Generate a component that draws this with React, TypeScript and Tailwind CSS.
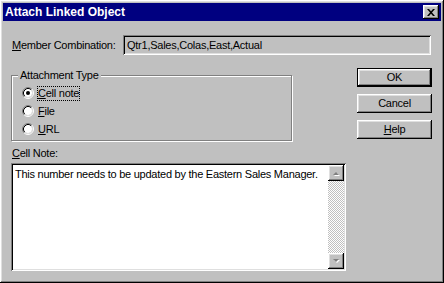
import React from "react";

const raised =
  "shadow-[inset_-1px_-1px_#000,inset_1px_1px_#fff,inset_-2px_-2px_#808080,inset_2px_2px_#dfdfdf]";
const sunken =
  "shadow-[inset_1px_1px_#808080,inset_-1px_-1px_#fff,inset_2px_2px_#000,inset_-2px_-2px_#dfdfdf]";

const Radio = ({ checked }: { checked?: boolean }) => (
  <svg width="12" height="12" viewBox="0 0 12 12" className="shrink-0">
    <circle cx="6" cy="6" r="4" fill="#fff" />
    <path d="M2.11 9.89 A5.5 5.5 0 0 1 9.89 2.11" stroke="#808080" fill="none" />
    <path d="M9.89 2.11 A5.5 5.5 0 0 1 2.11 9.89" stroke="#fff" fill="none" />
    <path d="M2.82 9.18 A4.5 4.5 0 0 1 9.18 2.82" stroke="#000" fill="none" />
    <path d="M9.18 2.82 A4.5 4.5 0 0 1 2.82 9.18" stroke="#dfdfdf" fill="none" />
    {checked && <circle cx="6" cy="6" r="2" fill="#000" />}
  </svg>
);

const Arrow = ({ up }: { up?: boolean }) => (
  <svg width="7" height="5" viewBox="0 0 7 5">
    {up ? (
      <>
        <path d="M1 5 L4 2 L7 5 Z" fill="#fff" />
        <path d="M0 4 L3 1 L6 4 Z" fill="#808080" />
      </>
    ) : (
      <>
        <path d="M1 1 L7 1 L4 4 Z" fill="#fff" />
        <path d="M0 0 L6 0 L3 3 Z" fill="#808080" />
      </>
    )}
  </svg>
);

const options = [
  { key: "C", rest: "ell note", checked: true },
  { key: "F", rest: "ile" },
  { key: "U", rest: "RL" },
];

export default function App() {
  return (
    <div
      className={`w-[444px] h-[283px] bg-[#c0c0c0] p-[3px] text-black text-[11px] leading-[13px] ${raised}`}
      style={{ fontFamily: '"Liberation Sans", Arial, sans-serif' }}
    >
      {/* title bar */}
      <div className="h-[18px] bg-[#000080] flex items-center justify-between pl-[2px] pr-[2px]">
        <span className="text-white font-bold text-[12px] leading-[14px]">Attach Linked Object</span>
        <button
          className={`w-[16px] h-[14px] bg-[#c0c0c0] flex items-center justify-center ${raised}`}
        >
          <svg width="8" height="7" viewBox="0 0 8 7">
            <path d="M0 0h2l2 2.2L6 0h2L5 3.5 8 7H6L4 4.8 2 7H0l3-3.5z" fill="#000" />
          </svg>
        </button>
      </div>

      <div className="pl-[8px] pt-[14px] tracking-[-0.25px]">
        {/* member combination */}
        <div className="flex items-center">
          <span className="w-[112px] pl-[1px]">
            <span className="underline">M</span>ember Combination:
          </span>
          <div className={`w-[308px] h-[20px] flex items-center pl-[4px] ${sunken}`}>
            Qtr1,Sales,Colas,East,Actual
          </div>
        </div>

        <div className="flex mt-[13px]">
          <div className="w-[335px]">
            {/* group box */}
            <div className="relative mt-[7px] w-[281px] h-[66px] border border-[#808080] shadow-[inset_1px_1px_#fff,1px_1px_#fff] pl-[10px] pt-[8px]">
              <span className="absolute left-[6px] top-[-7px] px-[2px] bg-[#c0c0c0]">
                Attachment Type
              </span>
              {options.map((o) => (
                <div key={o.key} className="h-[18px] flex items-center">
                  <Radio checked={o.checked} />
                  <span
                    className={`ml-[3px] border ${
                      o.checked ? "border-dotted border-black" : "border-transparent"
                    }`}
                  >
                    <span className="underline">{o.key}</span>
                    {o.rest}
                  </span>
                </div>
              ))}
            </div>

            <div className="mt-[6px] pl-[1px]">
              <span className="underline">C</span>ell Note:
            </div>

            {/* note area */}
            <div className={`mt-[3px] w-[335px] h-[108px] bg-white flex p-[2px] ${sunken}`}>
              <div className="flex-1 pl-[2px] pt-[3px] whitespace-nowrap overflow-hidden">
                This number needs to be updated by the Eastern Sales Manager.
              </div>
              <div className="w-[16px] flex flex-col bg-[repeating-conic-gradient(#c0c0c0_0%_25%,#fff_0%_50%)] bg-size-[2px_2px]">
                <div className={`h-[16px] bg-[#c0c0c0] flex items-center justify-center ${raised}`}>
                  <Arrow up />
                </div>
                <div className="flex-1" />
                <div className={`h-[16px] bg-[#c0c0c0] flex items-center justify-center ${raised}`}>
                  <Arrow />
                </div>
              </div>
            </div>
          </div>

          {/* buttons */}
          <div className="ml-[11px] flex flex-col gap-[7px]">
            <div className="border border-black">
              <button className={`w-[73px] h-[17px] bg-[#c0c0c0] flex items-center justify-center ${raised}`}>
                OK
              </button>
            </div>
            <button className={`w-[75px] h-[19px] bg-[#c0c0c0] flex items-center justify-center ${raised}`}>
              Cancel
            </button>
            <button className={`w-[75px] h-[19px] bg-[#c0c0c0] flex items-center justify-center ${raised}`}>
              <span className="underline">H</span>elp
            </button>
          </div>
        </div>
      </div>
    </div>
  );
}
